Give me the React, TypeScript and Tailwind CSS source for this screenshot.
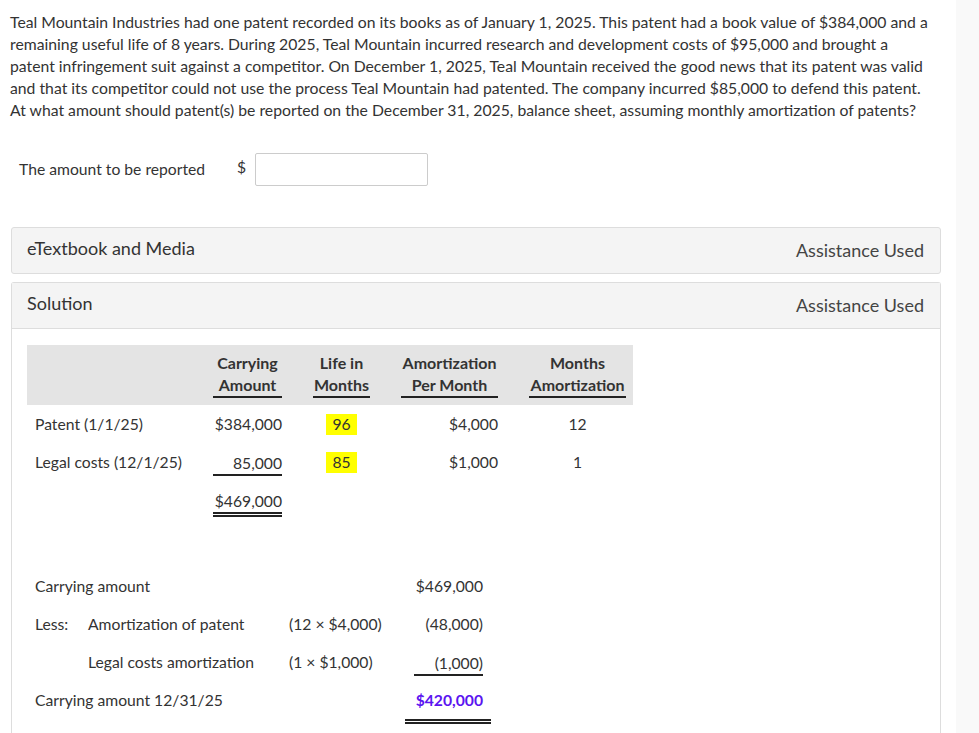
import React from 'react';

const font = { fontFamily: 'Lato, "Open Sans", sans-serif' };

const Hl: React.FC<{ children: React.ReactNode }> = ({ children }) => (
  <span className="inline-block bg-[#ffff00] px-[6px] leading-[21px]">{children}</span>
);

export default function App() {
  return (
    <div className="flex min-h-[733px] bg-white text-[#333]" style={font}>
      <main className="w-[956px] pl-[10px]">
        {/* Question */}
        <p className="w-[931px] whitespace-nowrap pt-[11px] text-[15.75px] leading-[22px]">
          Teal Mountain Industries had one patent recorded on its books as of January 1, 2025. This patent had a book value of $384,000 and a<br />
          remaining useful life of 8 years. During 2025, Teal Mountain incurred research and development costs of $95,000 and brought a<br />
          patent infringement suit against a competitor. On December 1, 2025, Teal Mountain received the good news that its patent was valid<br />
          and that its competitor could not use the process Teal Mountain had patented. The company incurred $85,000 to defend this patent.<br />
          At what amount should patent(s) be reported on the December 31, 2025, balance sheet, assuming monthly amortization of patents?
        </p>

        {/* Answer input */}
        <div className="mt-[32px] flex items-center pl-[9px] text-[15.7px]">
          <span className="w-[218px] whitespace-nowrap">The amount to be reported</span>
          <span className="-mt-1 w-[18px]">$</span>
          <input
            type="text"
            className="h-[33px] w-[173px] rounded-[2px] border border-[#cccccc] bg-white outline-none"
          />
        </div>

        {/* eTextbook panel */}
        <div className="ml-px mt-[41px] flex h-[47px] w-[930px] items-center justify-between rounded-[3px] border border-[#dddddd] bg-[#f4f4f4] pl-[15px] pr-[16px]">
          <span className="-mt-1 text-[18px]">eTextbook and Media</span>
          <span className="text-[18px] text-[#444]">Assistance Used</span>
        </div>

        {/* Solution panel */}
        <div className="ml-px mt-[8px] w-[930px] rounded-t-[3px] border border-b-0 border-[#dddddd]">
          <div className="flex h-[46px] items-center justify-between border-b border-[#dddddd] bg-[#f4f4f4] pl-[15px] pr-[16px]">
            <span className="-mt-1 text-[18px]">Solution</span>
            <span className="text-[18px] text-[#444]">Assistance Used</span>
          </div>

          <div className="pl-[15px] pt-[16px] pb-[40px] text-[15.7px]">
            {/* Table */}
            <div className="w-[606px] whitespace-nowrap">
              <div className="grid grid-cols-[147px_69px_57px_97px_97px] gap-x-[31px] bg-[#e4e4e4] pb-[7px] pl-2 pr-[7px] pt-[7px] text-[16px] font-bold leading-[22px]">
                <div />
                <div className="border-b-2 border-[#222] text-center">Carrying<br />Amount</div>
                <div className="border-b-2 border-[#222] text-center">Life in<br />Months</div>
                <div className="border-b-2 border-[#222] text-center">Amortization<br />Per Month</div>
                <div className="border-b-2 border-[#222] text-center">Months<br />Amortization</div>
              </div>

              <div className="grid grid-cols-[147px_69px_57px_97px_97px] gap-x-[31px] pl-2 pr-[7px] leading-[22px]">
                <div className="flex h-[38px] items-center">Patent (1/1/25)</div>
                <div className="flex h-[38px] items-center justify-end">$384,000</div>
                <div className="flex h-[38px] items-center justify-center"><Hl>96</Hl></div>
                <div className="flex h-[38px] items-center justify-end">$4,000</div>
                <div className="flex h-[38px] items-center justify-center">12</div>

                <div className="flex h-[38px] items-center">Legal costs (12/1/25)</div>
                <div className="flex h-[38px] items-center">
                  <div className="mt-[3px] w-full border-b-2 border-[#222] text-right">85,000</div>
                </div>
                <div className="flex h-[38px] items-center justify-center"><Hl>85</Hl></div>
                <div className="flex h-[38px] items-center justify-end">$1,000</div>
                <div className="flex h-[38px] items-center justify-center">1</div>

                <div className="h-[38px]" />
                <div className="flex h-[38px] items-center">
                  <div className="mt-[6px] w-full border-b-[5px] border-double border-[#222] text-right">$469,000</div>
                </div>
                <div className="h-[38px]" />
                <div className="h-[38px]" />
                <div className="h-[38px]" />
              </div>
            </div>

            {/* Carrying amount calc */}
            <div className="mt-[48px] grid grid-cols-[53px_201px_110px_84px] whitespace-nowrap pl-2 leading-[22px]">
              <div className="col-span-2 flex h-[38px] items-center">Carrying amount</div>
              <div className="h-[38px]" />
              <div className="flex h-[38px] items-center justify-end">$469,000</div>

              <div className="flex h-[38px] items-center">Less:</div>
              <div className="flex h-[38px] items-center">Amortization of patent</div>
              <div className="flex h-[38px] items-center">(12 × $4,000)</div>
              <div className="flex h-[38px] items-center justify-end">(48,000)</div>

              <div className="h-[38px]" />
              <div className="flex h-[38px] items-center">Legal costs amortization</div>
              <div className="flex h-[38px] items-center">(1 × $1,000)</div>
              <div className="flex h-[38px] items-center justify-end">
                <div className="mt-[3px] w-[69px] border-b-2 border-[#222] text-right">(1,000)</div>
              </div>

              <div className="col-span-2 flex h-[38px] items-center">Carrying amount 12/31/25</div>
              <div className="h-[38px]" />
              <div className="flex h-[38px] items-center justify-end">
                <div className="-mr-2 mt-[13px] w-[86px] border-b-[5px] border-double border-[#222] pb-[8px] pr-2 text-right font-bold text-[#5b14f0]">
                  $420,000
                </div>
              </div>
            </div>
          </div>
        </div>
      </main>
      <aside className="flex-1 bg-[#f9f9f9]" />
    </div>
  );
}
